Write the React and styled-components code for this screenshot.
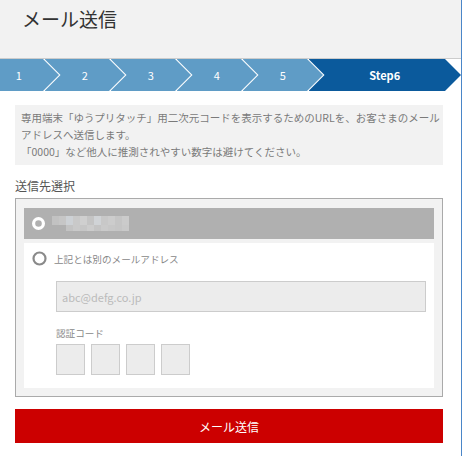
import React from "react";
import styled, { createGlobalStyle } from "styled-components";

const GlobalStyle = createGlobalStyle`
    body {
        margin: 0;
        background: #fff;
        font-family: "Noto Sans CJK JP", "Liberation Sans", sans-serif;
    }
`;

const Page = styled.div`
    width: 461px;
    min-height: 100vh;
    border-right: 1px solid #4a86c8;
`;

const Header = styled.header`
    height: 58px;
    background: #f2f2f2;
    border-bottom: 1px solid #cccccc;
    padding: 8px 0 0 22px;
    box-sizing: border-box;
    height: 59px;
`;

const Title = styled.h1`
    margin: 0;
    font-size: 19px;
    line-height: 22px;
    font-weight: 400;
    color: #333;
`;

const StepBar = styled.ol`
    display: flex;
    height: 32px;
    margin: 0;
    padding: 0;
    list-style: none;
    overflow: hidden;
`;

const Step = styled.li`
    flex: 0 0 ${(p) => p.$w}px;
    margin-left: -14.5px;
    display: flex;
    align-items: center;
    justify-content: center;
    background: ${(p) => (p.$active ? "#0b5a9c" : "#5f9cc6")};
    color: #fff;
    font-size: 11px;
    font-weight: ${(p) => (p.$active ? 700 : 400)};
    clip-path: polygon(0 0, calc(100% - 16px) 0, 100% 50%, calc(100% - 16px) 100%, 0 100%, 16px 50%);

    &:first-child {
        margin-left: -21.5px;
    }
`;

const Content = styled.main`
    padding: 14px 18px 0 15px;
`;

const Notice = styled.div`
    background: #f2f2f2;
    padding: 4px 6px 5px;
    color: #7a7a7a;
    font-size: 10.5px;
    line-height: 17px;
    white-space: nowrap;
`;

const SectionTitle = styled.h2`
    margin: 12px 0 3px;
    font-size: 12px;
    line-height: 18px;
    font-weight: 400;
    color: #555;
`;

const SelectBox = styled.div`
    border: 1px solid #aaaaaa;
    background: #f2f2f2;
    padding: 9px 8px 8px;
    display: flex;
    flex-direction: column;
    gap: 4px;
`;

const OptionRow = styled.label`
    display: flex;
    align-items: center;
    gap: 7px;
    height: 31px;
    padding-left: 8px;
    background: ${(p) => (p.$selected ? "#b0b0b0" : "transparent")};
    color: #888;
    font-size: 9.6px;
`;

const OtherPanel = styled.div`
    background: #fff;
    padding-bottom: 13px;
`;

const Indent = styled.div`
    padding: 7px 8px 0 32px;
`;

const EmailInput = styled.input`
    display: block;
    width: 100%;
    height: 31px;
    box-sizing: border-box;
    border: 1px solid #cccccc;
    background: #ececec;
    padding: 0 5px;
    font-family: inherit;
    font-size: 11px;
    outline: none;

    &::placeholder {
        color: #bbbbbb;
    }
`;

const FieldLabel = styled.div`
    margin-top: 14px;
    font-size: 9.6px;
    line-height: 14px;
    color: #888;
`;

const CodeRow = styled.div`
    display: flex;
    gap: 6px;
    margin-top: 4px;
`;

const CodeBox = styled.input`
    width: 29px;
    height: 31px;
    box-sizing: border-box;
    border: 1px solid #cccccc;
    background: #ececec;
    padding: 0;
    outline: none;
`;

const SendButton = styled.button`
    display: block;
    width: 100%;
    height: 34px;
    margin-top: 12px;
    border: none;
    background: #cc0000;
    color: #fff;
    font-family: inherit;
    font-size: 12px;
    cursor: pointer;
`;

const RadioOn = () => (
    <svg width="13" height="13" viewBox="0 0 13 13">
        <circle cx="6.5" cy="6.5" r="4.9" fill="none" stroke="#fff" strokeWidth="3.2" />
    </svg>
);

const RadioOff = () => (
    <svg width="15" height="15" viewBox="0 0 15 15">
        <circle cx="7.5" cy="7.5" r="6" fill="none" stroke="#8a8a8a" strokeWidth="2.2" />
    </svg>
);

// hidden address, shown as a mosaic
const top = ["#c2c2c2", "#c6c6c6", "#cdd1d5", "#c9c9c9", "#cfcfcf", "#c4c4c4", "#d0d3d6", "#c8c8c8", "#cccccc", "#c5c5c5", "#cbcbcb"];
const bottom = ["#c3c3c3", "#c9c9c9", "#c6c6c6", "#cccccc", "#c4c4c4", "#cacaca", "#c7c7c7", "#c5c5c5", "#c9c9c9"];

const Mosaic = () => (
    <svg width="78" height="15" viewBox="0 0 78 15">
        {top.map((c, i) => (
            <rect key={"t" + i} x={i * 7} y="0" width="7" height="9" fill={c} />
        ))}
        {bottom.map((c, i) => (
            <rect key={"b" + i} x={14 + i * 7} y="9" width="7" height="6" fill={c} />
        ))}
    </svg>
);

const steps = ["1", "2", "3", "4", "5"];

const App = () => {
    return (
        <>
            <GlobalStyle />
            <Page>
                <Header>
                    <Title>メール送信</Title>
                </Header>
                <StepBar>
                    {steps.map((s) => (
                        <Step key={s} $w={80.5}>
                            {s}
                        </Step>
                    ))}
                    <Step $w={152.5} $active>
                        Step6
                    </Step>
                </StepBar>
                <Content>
                    <Notice>
                        専用端末「ゆうプリタッチ」用二次元コードを表示するためのURLを、お客さまのメール
                        <br />
                        アドレスへ送信します。
                        <br />
                        「0000」など他人に推測されやすい数字は避けてください。
                    </Notice>
                    <SectionTitle>送信先選択</SectionTitle>
                    <SelectBox>
                        <OptionRow $selected>
                            <RadioOn />
                            <Mosaic />
                        </OptionRow>
                        <OtherPanel>
                            <OptionRow>
                                <RadioOff />
                                上記とは別のメールアドレス
                            </OptionRow>
                            <Indent>
                                <EmailInput placeholder="abc@defg.co.jp" />
                                <FieldLabel>認証コード</FieldLabel>
                                <CodeRow>
                                    <CodeBox readOnly />
                                    <CodeBox readOnly />
                                    <CodeBox readOnly />
                                    <CodeBox readOnly />
                                </CodeRow>
                            </Indent>
                        </OtherPanel>
                    </SelectBox>
                    <SendButton>メール送信</SendButton>
                </Content>
            </Page>
        </>
    );
};

export default App;
